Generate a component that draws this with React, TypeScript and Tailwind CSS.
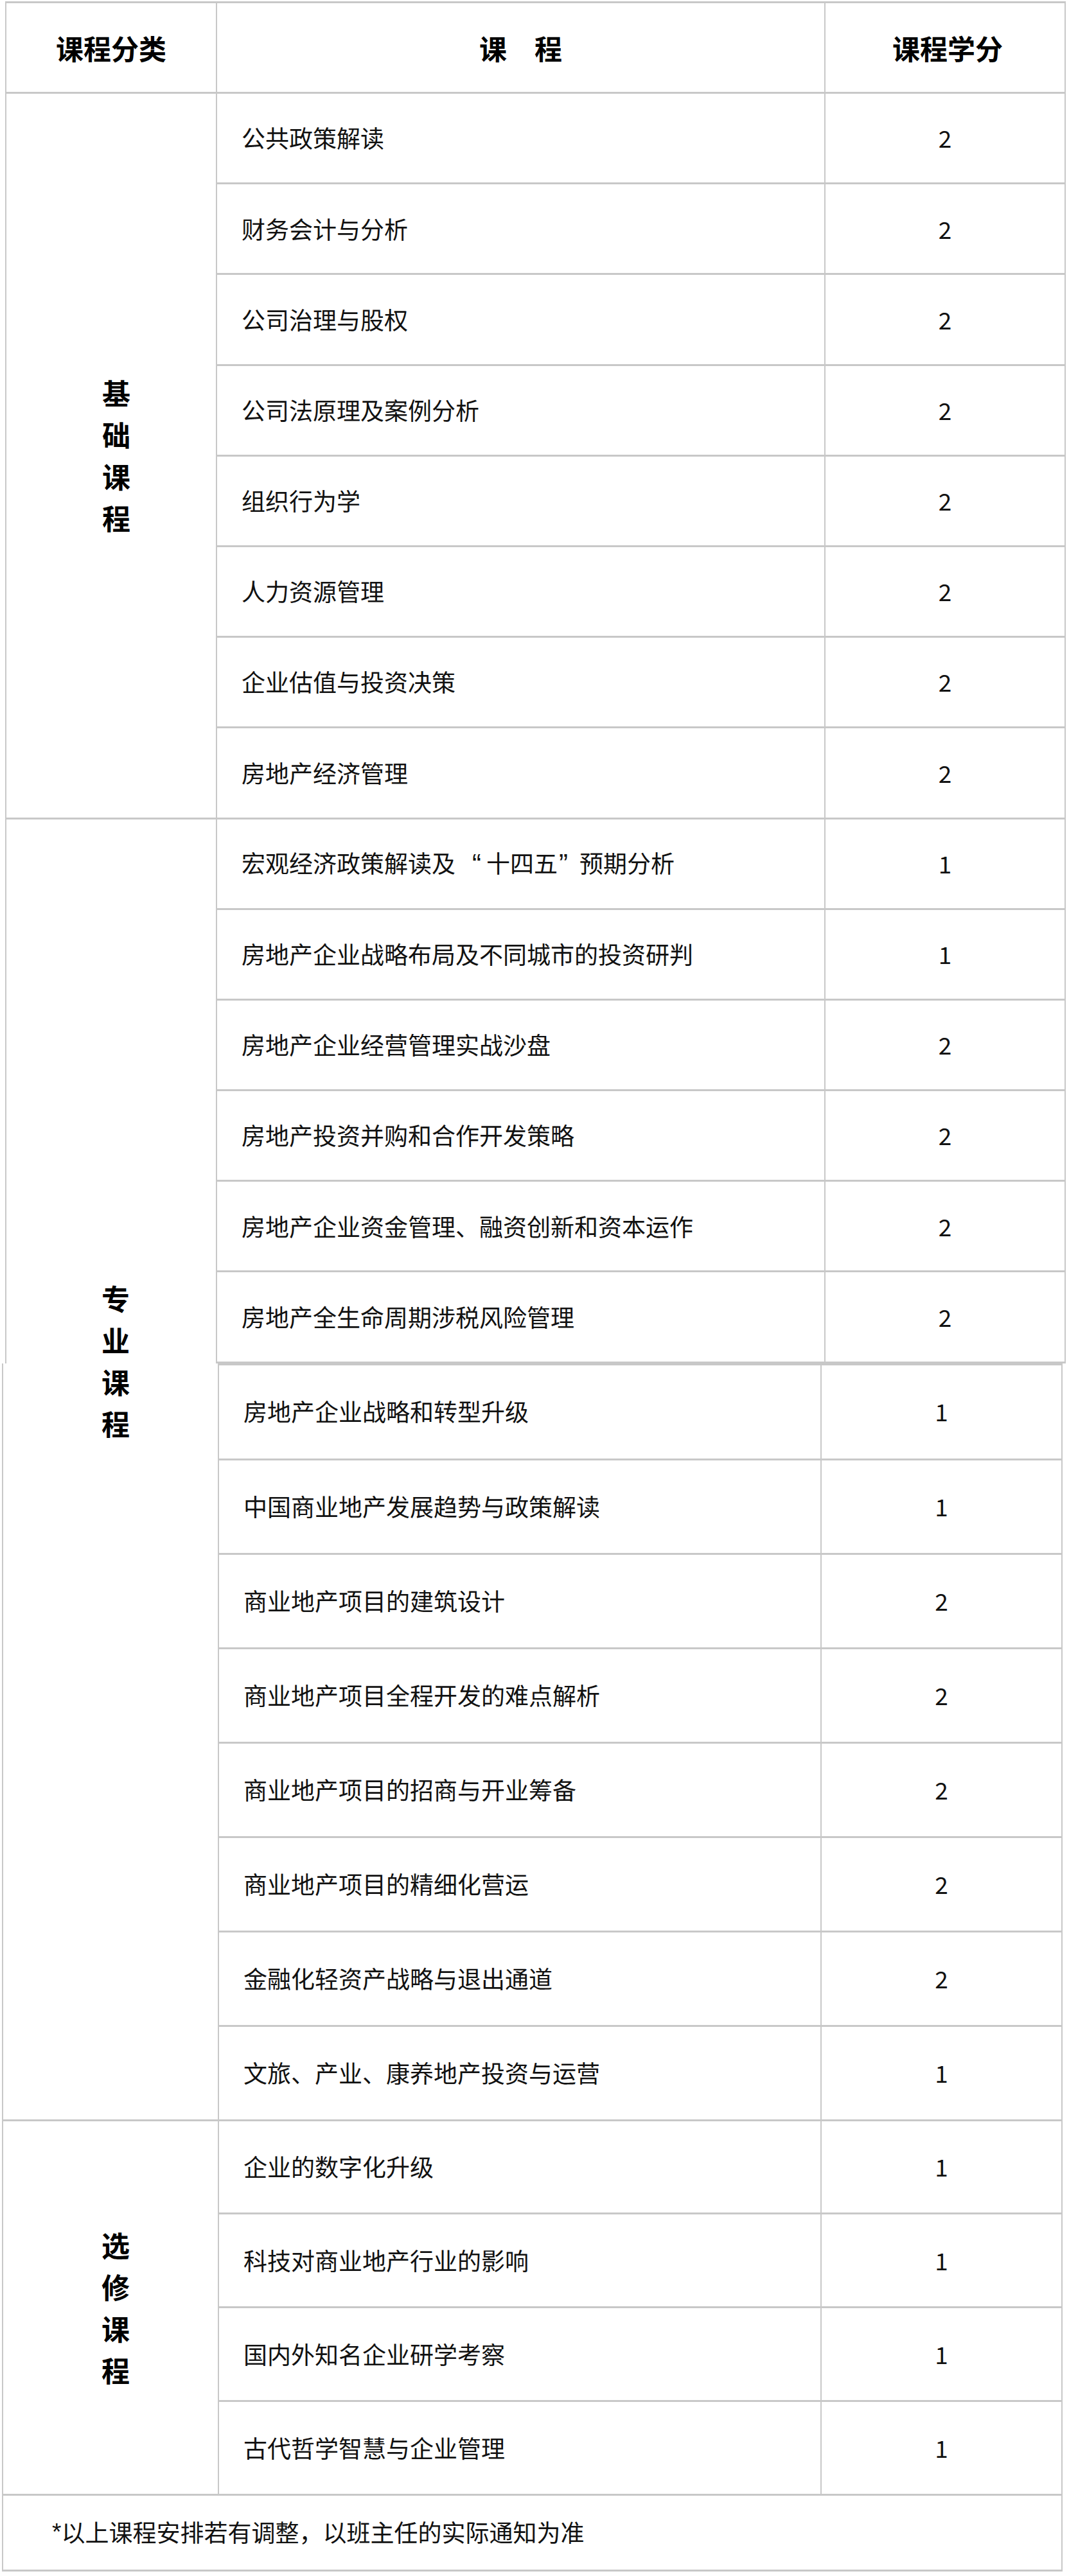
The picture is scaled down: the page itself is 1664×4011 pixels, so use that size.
import React from "react";

const B = "border-[#c8c8c8]";

const basic = [
  "公共政策解读",
  "财务会计与分析",
  "公司治理与股权",
  "公司法原理及案例分析",
  "组织行为学",
  "人力资源管理",
  "企业估值与投资决策",
  "房地产经济管理",
];
const basicCredits = ["2", "2", "2", "2", "2", "2", "2", "2"];

const Q = { fontFamily: '"Liberation Sans", sans-serif' };

const pro1: [React.ReactNode, string][] = [
  [
    <>
      宏观经济政策解读及
      <span className="ml-[26px] mr-[8px] text-[42px]" style={Q}>
        “
      </span>
      十四五
      <span className="ml-[2px] mr-[18px] text-[42px]" style={Q}>
        ”
      </span>
      预期分析
    </>,
    "1",
  ],
  ["房地产企业战略布局及不同城市的投资研判", "1"],
  ["房地产企业经营管理实战沙盘", "2"],
  ["房地产投资并购和合作开发策略", "2"],
  ["房地产企业资金管理、融资创新和资本运作", "2"],
  ["房地产全生命周期涉税风险管理", "2"],
];

const pro2: [string, string][] = [
  ["房地产企业战略和转型升级", "1"],
  ["中国商业地产发展趋势与政策解读", "1"],
  ["商业地产项目的建筑设计", "2"],
  ["商业地产项目全程开发的难点解析", "2"],
  ["商业地产项目的招商与开业筹备", "2"],
  ["商业地产项目的精细化营运", "2"],
  ["金融化轻资产战略与退出通道", "2"],
  ["文旅、产业、康养地产投资与运营", "1"],
];

const elective: [string, string][] = [
  ["企业的数字化升级", "1"],
  ["科技对商业地产行业的影响", "1"],
  ["国内外知名企业研学考察", "1"],
  ["古代哲学智慧与企业管理", "1"],
];

function Label({ text }: { text: string }) {
  return (
    <div className="flex flex-col items-center pl-[16px] text-[44px] font-bold leading-[65px] text-black">
      {text.split("").map((c, i) => (
        <span key={i}>{c}</span>
      ))}
    </div>
  );
}

function CourseCell({ children, top }: { children: React.ReactNode; top?: boolean }) {
  return (
    <div
      className={`flex items-center border-r-2 border-b-[3px] ${B} ${top ? "border-t-[3px]" : ""} pl-[38px] text-[37px] text-[#111]`}
    >
      <span className="whitespace-nowrap leading-[1.5]">{children}</span>
    </div>
  );
}

function CreditCell({ children, top }: { children: React.ReactNode; top?: boolean }) {
  return (
    <div
      className={`flex items-center justify-center border-r-2 border-b-[3px] ${B} ${top ? "border-t-[3px]" : ""} text-[37px] text-[#111]`}
    >
      {children}
    </div>
  );
}

export default function App() {
  return (
    <div
      className="relative w-[1664px] min-h-[4011px] bg-white"
      style={{ fontFamily: '"Noto Sans CJK SC", "Noto Sans", sans-serif' }}
    >
      <div className="pt-[2px]">
        {/* Top table */}
        <div
          className={`ml-[8px] grid w-[1651px] grid-cols-[328px_947px_374px] grid-rows-[141px_repeat(14,141.2px)] border-l-2 border-t-[3px] ${B}`}
        >
          <div className={`flex items-center justify-center border-r-2 border-b-[3px] ${B} text-[43px] font-bold text-black`}>
            课程分类
          </div>
          <div className={`flex items-center justify-center border-r-2 border-b-[3px] ${B} text-[43px] font-bold text-black`}>
            课　程
          </div>
          <div className={`flex items-center justify-center border-r-2 border-b-[3px] ${B} pl-[8px] text-[43px] font-bold text-black`}>
            课程学分
          </div>

          <div className={`row-span-8 flex items-center justify-center border-r-2 border-b-[3px] ${B}`}>
            <Label text="基础课程" />
          </div>
          {basic.map((c, i) => (
            <React.Fragment key={c}>
              <CourseCell>{c}</CourseCell>
              <CreditCell>{basicCredits[i]}</CreditCell>
            </React.Fragment>
          ))}

          <div className={`row-span-6 border-r-2 ${B}`} />
          {pro1.map(([c, n], i) => (
            <React.Fragment key={i}>
              <CourseCell>{c}</CourseCell>
              <CreditCell>{n}</CreditCell>
            </React.Fragment>
          ))}
        </div>

        {/* Bottom table */}
        <div
          className={`ml-[3px] grid w-[1651px] grid-cols-[336px_938px_375px] grid-rows-[151px_repeat(7,147px)_repeat(4,145.75px)_118px] border-l-2 ${B}`}
        >
          <div className={`row-span-8 border-r-2 border-b-[3px] ${B}`} />
          {pro2.map(([c, n], i) => (
            <React.Fragment key={c}>
              <CourseCell top={i === 0}>{c}</CourseCell>
              <CreditCell top={i === 0}>{n}</CreditCell>
            </React.Fragment>
          ))}

          <div className={`row-span-4 flex items-center justify-center border-r-2 border-b-[3px] ${B}`}>
            <Label text="选修课程" />
          </div>
          {elective.map(([c, n]) => (
            <React.Fragment key={c}>
              <CourseCell>{c}</CourseCell>
              <CreditCell>{n}</CreditCell>
            </React.Fragment>
          ))}

          <div
            className={`col-span-3 flex items-center border-r-2 border-b-[3px] ${B} pl-[76px] text-[37px] text-[#111]`}
          >
            <span style={Q}>*</span>
            以上课程安排若有调整，以班主任的实际通知为准
          </div>
        </div>
      </div>

      {/* 专业课程 label spanning the two tables */}
      <div className="absolute left-[8px] top-[1989px] w-[328px]">
        <Label text="专业课程" />
      </div>
    </div>
  );
}
